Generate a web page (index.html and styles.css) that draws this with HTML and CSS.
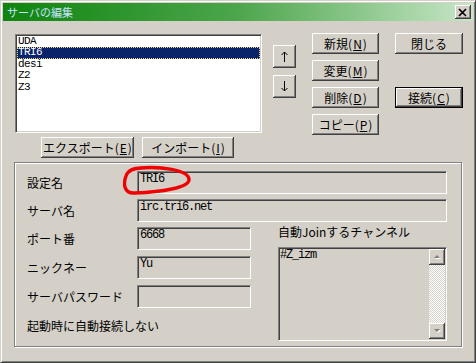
FILE: index.html
```html
<!DOCTYPE html>
<html>
<head>
    <title>サーバの編集</title>
    <meta http-equiv="content-type" content="text/html; charset=utf-8">
    <link rel="stylesheet" href="styles.css">
</head>
<body>
<div class="window">
	<div class="titlebar">
		<span class="title">サーバの編集</span>
		<span class="btn closebtn">
			<svg width="10" height="9" viewBox="0 0 10 9"><path d="M1 1 L8 8 M8 1 L1 8" stroke="#000" stroke-width="1.7" fill="none"/></svg>
		</span>
	</div>
	<div class="content">
		<div class="toprow">
			<div class="leftcol">
				<div class="listbox sunken">
					<div class="item">UDA</div>
					<div class="item sel">TRI6</div>
					<div class="item">desi</div>
					<div class="item">Z2</div>
					<div class="item">Z3</div>
				</div>
				<div class="iorow">
					<div class="btn export">エクスポート(<u>E</u>)</div>
					<div class="btn import">インポート(<u>I</u>)</div>
				</div>
			</div>
			<div class="arrows">
				<div class="btn arrow">
					<svg width="7" height="11" viewBox="0 0 7 11"><path d="M3.5 1 V11 M0.5 4 L3.5 1 L6.5 4" stroke="#000" stroke-width="1" fill="none"/></svg>
				</div>
				<div class="btn arrow">
					<svg width="7" height="11" viewBox="0 0 7 11"><path d="M3.5 0 V10 M0.5 7 L3.5 10 L6.5 7" stroke="#000" stroke-width="1" fill="none"/></svg>
				</div>
			</div>
			<div class="btncol">
				<div class="btn">新規(<u>N</u>)</div>
				<div class="btn">変更(<u>M</u>)</div>
				<div class="btn">削除(<u>D</u>)</div>
				<div class="btn">コピー(<u>P</u>)</div>
			</div>
			<div class="btncol col2">
				<div class="btn">閉じる</div>
				<div class="btn default">接続(<u>C</u>)</div>
			</div>
		</div>

		<div class="group">
			<div class="label">設定名</div>
			<div class="field sunken wide">TRI6</div>

			<div class="label">サーバ名</div>
			<div class="field sunken wide">irc.tri6.net</div>

			<div class="label">ポート番</div>
			<div class="field sunken">6668</div>

			<div class="label">ニックネー</div>
			<div class="field sunken">Yu</div>

			<div class="label">サーバパスワード</div>
			<div class="field sunken"></div>

			<div class="label last">起動時に自動接続しない</div>

			<div class="chanblock">
				<div class="chanlabel">自動Joinするチャンネル</div>
				<div class="chanlist sunken">
					<div class="chantext">#Z_izm</div>
					<div class="scrollbar">
						<div class="btn sbtn">
							<svg width="9" height="6" viewBox="0 0 9 6"><path d="M2 5 L5 2 L8 5 Z" fill="#fff"/><path d="M1 4 L4 1 L7 4 Z" fill="#808080"/></svg>
						</div>
						<div class="track"></div>
						<div class="btn sbtn">
							<svg width="9" height="6" viewBox="0 0 9 6"><path d="M2 2 L5 5 L8 2 Z" fill="#fff"/><path d="M1 1 L4 4 L7 1 Z" fill="#808080"/></svg>
						</div>
					</div>
				</div>
			</div>

			<!-- red mark drawn over the name field -->
			<svg class="redmark" width="72" height="32" viewBox="0 0 72 32">
				<path d="M17 3 C37 1, 65 5, 66 14 C67 23, 37 27, 12 28 C1 29, 0 19, 3 11 C5 5, 10 3, 19 3" stroke="#f00000" stroke-width="3.4" fill="none" stroke-linecap="round"/>
			</svg>
		</div>
	</div>
</div>
</body>
</html>
```

FILE: styles.css
```css
* {
	margin: 0;
	padding: 0;
}

body {
	background: #d4d0c8;
	font-family: "Noto Sans CJK JP", sans-serif;
	font-size: 12px;
	color: #000;
	overflow: hidden;
}

.window {
	width: 476px;
	height: 363px;
	box-sizing: border-box;
	border: 1px solid;
	border-color: #d4d0c8 #404040 #404040 #d4d0c8;
	box-shadow: inset 1px 1px #fff, inset -1px -1px #808080;
	padding: 2px;
	background: #d4d0c8;
}

.titlebar {
	height: 18px;
	display: flex;
	align-items: center;
	justify-content: space-between;
	padding: 0 2px;
	background: linear-gradient(to right, #0e840e 0%, #4ca64c 50%, #c8e6c8 100%);
}

.title {
	color: #c8e2ff;
	font-size: 11px;
	line-height: 18px;
	padding-left: 2px;
}

.sunken {
	box-sizing: border-box;
	border: 1px solid;
	border-color: #808080 #fff #fff #808080;
	box-shadow: inset 1px 1px #404040, inset -1px -1px #d4d0c8;
	padding: 1px;
}

.btn {
	box-sizing: border-box;
	display: flex;
	align-items: center;
	justify-content: center;
	height: 21px;
	background: #d4d0c8;
	box-shadow: inset -1px -1px #404040, inset 1px 1px #fff, inset -2px -2px #808080;
	line-height: 1;
	white-space: nowrap;
}

.btn u {
	text-decoration: underline;
	padding: 0 1px;
}

.btn.default {
	border: 1px solid #000;
}

.closebtn {
	width: 16px;
	height: 14px;
}

.content {
	padding: 12px 0 0 12px;
}

.toprow {
	display: flex;
	align-items: flex-start;
}

.leftcol {
	width: 247px;
	margin-top: 1px;
}

.listbox {
	height: 99px;
	background: #fff;
}

.item {
	height: 11.4px;
	line-height: 11.4px;
	padding-left: 1px;
	font-family: "Liberation Mono", monospace;
	font-size: 11px;
	letter-spacing: -0.6px;
}

.item.sel {
	background: #0a246a;
	color: #fff;
	outline: 1px dotted #f0d878;
	outline-offset: -1px;
}

.iorow {
	display: flex;
	gap: 8px;
	margin-top: 4px;
	padding-left: 26px;
}

.export {
	width: 93px;
}

.import {
	width: 92px;
}

.arrows {
	display: flex;
	flex-direction: column;
	gap: 7px;
	margin: 12px 0 0 11px;
}

.arrow {
	width: 23px;
	height: 23px;
}

.btncol {
	display: flex;
	flex-direction: column;
	gap: 6px;
	width: 67px;
	margin-left: 16px;
}

.col2 {
	width: 68px;
	gap: 33px;
}

.group {
	position: relative;
	box-sizing: border-box;
	width: 448px;
	height: 185px;
	margin: 4px 0 0 -1px;
	border: 1px solid #808080;
	box-shadow: inset 1px 1px #fff, 1px 1px #fff;
	padding: 8px 0 0 12px;
	display: grid;
	grid-template-columns: 110px 114px 27px 169px;
	grid-template-rows: 28px 28px 29px 29px 29px auto;
}

.label {
	height: 23px;
	display: flex;
	align-items: center;
	grid-column: 1;
	white-space: nowrap;
}

.label.last {
	grid-row: 6;
	grid-column: 1 / 3;
}

.field {
	height: 23px;
	grid-column: 2;
	background: #d4d0c8;
	font-family: "Liberation Mono", monospace;
	font-size: 12px;
	letter-spacing: -1.2px;
	line-height: 13px;
	padding-left: 2px;
}

.field.wide {
	grid-column: 2 / 5;
}

.chanblock {
	grid-column: 4;
	grid-row: 3 / 7;
	margin-top: -2px;
}

.chanlabel {
	line-height: 14px;
	white-space: nowrap;
}

.chanlist {
	display: flex;
	height: 94px;
	margin-top: 8px;
	background: #d4d0c8;
}

.chantext {
	flex: 1;
	font-family: "Liberation Mono", monospace;
	font-size: 12px;
	letter-spacing: -1.2px;
	line-height: 12px;
}

.scrollbar {
	width: 16px;
	display: flex;
	flex-direction: column;
}

.sbtn {
	width: 16px;
	height: 16px;
}

.track {
	flex: 1;
	background: repeating-conic-gradient(#fff 0 25%, #d4d0c8 0 50%) 0 0 / 2px 2px;
}

.redmark {
	position: absolute;
	left: 108px;
	top: 2px;
}
```
